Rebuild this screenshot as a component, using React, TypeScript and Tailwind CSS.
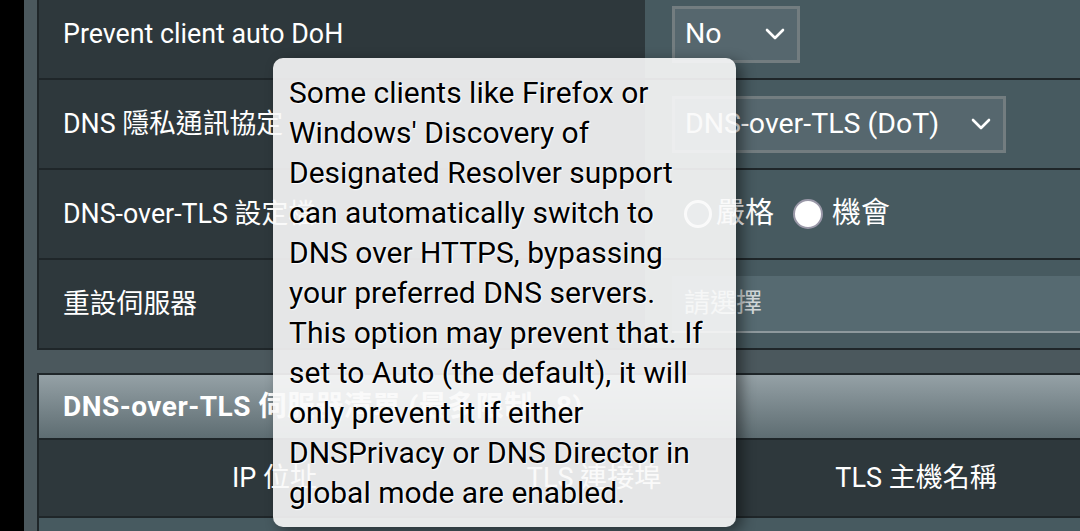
const font = { fontFamily: "Roboto, 'Noto Sans CJK TC', sans-serif" };

const Chevron = () => (
  <svg width="20" height="12" viewBox="0 0 20 12" fill="none">
    <path
      d="M2 2 L10 10 L18 2"
      stroke="white"
      strokeWidth="2.6"
      strokeLinecap="round"
      strokeLinejoin="round"
    />
  </svg>
);

const Row = ({
  label,
  children,
}: {
  label: string;
  children?: React.ReactNode;
}) => (
  <div className="flex h-[90px] border-b-2 border-[#1f2629]">
    <div className="w-[606px] bg-[#2e383c] flex items-center pl-[24px] text-[26.8px] text-white">
      {label}
    </div>
    <div className="flex-1 bg-[#475a60] flex items-center pl-[27px]">
      {children}
    </div>
  </div>
);

const Select = ({ value, width }: { value: string; width: string }) => (
  <div
    className={`${width} h-[57px] bg-[#56676e] border-[3px] border-[#737d80] flex items-center justify-between pl-[10px] pr-[12px] text-[28.5px] text-white`}
  >
    <span>{value}</span>
    <Chevron />
  </div>
);

const tip = [
  "Some clients like Firefox or",
  "Windows' Discovery of",
  "Designated Resolver support",
  "can automatically switch to",
  "DNS over HTTPS, bypassing",
  "your preferred DNS servers.",
  "This option may prevent that. If",
  "set to Auto (the default), it will",
  "only prevent it if either",
  "DNSPrivacy or DNS Director in",
  "global mode are enabled.",
];

const App = () => {
  return (
    <div
      style={font}
      className="relative w-[1080px] h-[531px] overflow-hidden bg-black flex"
    >
      <div className="w-[24px] shrink-0 bg-black" />
      <div className="flex-1 bg-[#4b585d] pl-[13px]">
        {/* settings table */}
        <div className="-mt-[10px] border-l-2 border-[#1f2629]">
          <Row label="Prevent client auto DoH">
            <Select value="No" width="w-[128px]" />
          </Row>
          <Row label="DNS 隱私通訊協定">
            <Select value="DNS-over-TLS (DoT)" width="w-[334px]" />
          </Row>
          <Row label="DNS-over-TLS 設定檔">
            <div className="ml-[12px] flex items-center text-[29px] text-white">
              <span className="w-[28px] h-[28px] rounded-full border-[3px] border-white bg-[#5a7078]" />
              <span className="ml-[4px]">嚴格</span>
              <span className="ml-[19px] w-[30px] h-[30px] rounded-full bg-white border-2 border-[#9a98a8]" />
              <span className="ml-[9px]">機會</span>
            </div>
          </Row>
          <Row label="重設伺服器">
            <div className="flex-1 h-[57px] bg-[#566a71] border-b-2 border-[#8e999d] flex items-center pl-[12px] text-[26px] text-[#d3d9db]">
              請選擇
            </div>
          </Row>
        </div>

        {/* server list */}
        <div className="mt-[23px] border-t-2 border-l-2 border-[#1f2629]">
          <div className="h-[65px] bg-gradient-to-b from-[#95a1a6] to-[#5e6d72] flex items-center pl-[24px] text-[28px] font-bold tracking-[0.5px] text-white border-b-2 border-[#1f2629]">
            DNS-over-TLS 伺服器清單 (最多限制 : 8)
          </div>
          <div className="h-[78px] bg-[#2e383c] grid grid-cols-[471px_168px_1fr] items-center text-center text-[27px] text-white border-b-2 border-[#1f2629]">
            <span>IP 位址</span>
            <span>TLS 連接埠</span>
            <span className="pl-[74px]">TLS 主機名稱</span>
          </div>
          <div className="h-[40px] bg-[#475a60]" />
        </div>
      </div>

      {/* tooltip */}
      <div className="absolute left-[273px] top-[58px] w-[463px] h-[469px] rounded-[10px] bg-[rgba(250,250,250,0.9)] shadow-[6px_4px_14px_rgba(0,0,0,0.45)] pl-[16px] pt-[15px]">
        <div className="text-[30px] leading-[40px] text-black whitespace-nowrap [text-shadow:0_0_2px_#fff,1px_1px_1px_#fff]">
          {tip.map((line) => (
            <div key={line}>{line}</div>
          ))}
        </div>
      </div>
    </div>
  );
};

export default App;
